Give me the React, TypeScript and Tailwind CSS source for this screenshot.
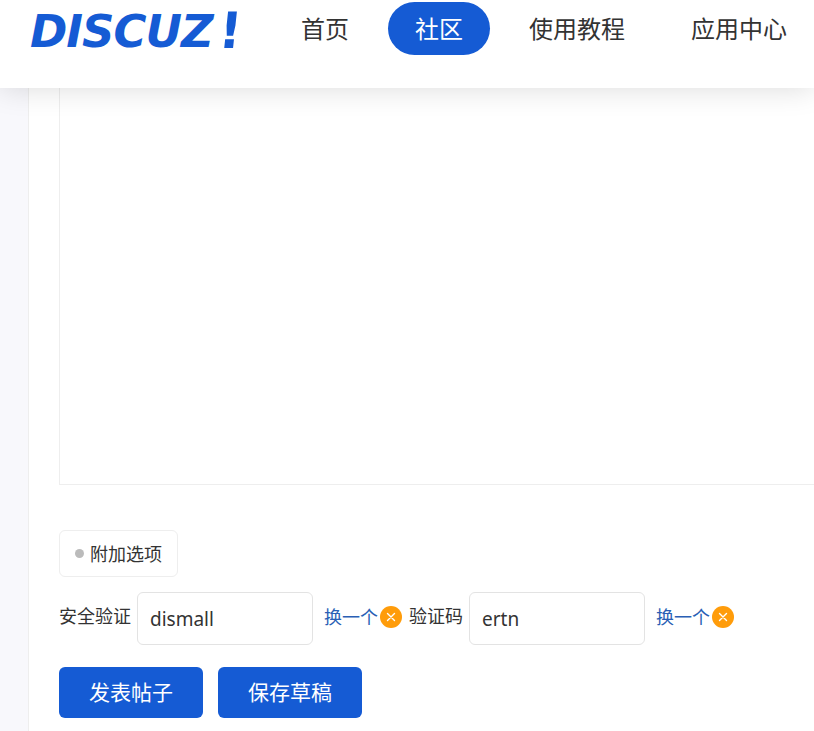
const cjk = "font-['Noto_Sans','Noto_Sans_CJK_SC',sans-serif]";

const NAV = ["首页", "社区", "使用教程", "应用中心"];

const RefreshLink = () => (
  <div className="flex items-center pb-[4px]">
    <a className="text-[18px] leading-[22px] text-[#2a5fb5]">换一个</a>
    <span className="ml-[2px] flex h-[22px] w-[22px] items-center justify-center rounded-full bg-[#ff9c0a]">
      <svg width="10" height="10" viewBox="0 0 10 10" fill="none" stroke="#fff" strokeWidth="1.4" strokeLinecap="round">
        <path d="M1.5 1.5l7 7M8.5 1.5l-7 7" />
      </svg>
    </span>
  </div>
);

const App = () => {
  return (
    <div className={`flex h-[731px] w-[814px] flex-col overflow-hidden bg-white ${cjk}`}>
      {/* Header */}
      <header className="relative z-10 flex h-[88px] shrink-0 items-start bg-white pl-[30px] shadow-[0_0_30px_rgba(0,0,0,0.15)]">
        <div className="mt-[6px] flex w-[244px] shrink-0 items-baseline whitespace-nowrap text-[#155bd4] font-['DejaVu_Sans',sans-serif] text-[45px] font-bold italic leading-[48px]">
          <span className="tracking-[-1px]">DISCUZ</span>
          <span className="ml-[6px] inline-block translate-y-[1px] -skew-x-[6deg] text-[50px] not-italic leading-[48px]">!</span>
        </div>
        <nav className="mt-[2px] flex gap-[12px]">
          {NAV.map((item) => (
            <a
              key={item}
              className={
                item === "社区"
                  ? "flex h-[53px] items-center rounded-full bg-[#155bd4] px-[27px] text-[24px] text-white"
                  : "flex h-[53px] items-center rounded-full px-[27px] text-[24px] text-[#333]"
              }
            >
              {item}
            </a>
          ))}
        </nav>
      </header>

      <main className="flex flex-1 bg-[#f8f8fc]">
        <div className="w-[28px] shrink-0" />
        <div className="min-w-0 flex-1 border-l border-[#eeeeee] bg-white pl-[30px]">
          {/* Editor area */}
          <div className="-mr-[10px] h-[397px] border border-t-0 border-[#eeeeee]" />

          <div className="mt-[45px] flex h-[47px] w-[119px] items-center rounded-[6px] border border-[#eeeeee] pl-[15px]">
            <span className="h-[9px] w-[9px] rounded-full bg-[#bbbbbb]" />
            <span className="ml-[6px] text-[18px] leading-none text-[#333]">附加选项</span>
          </div>

          {/* Captcha row */}
          <div className="mt-[15px] flex h-[53px] items-center">
            <span className="pb-[4px] text-[18px] text-[#333]">安全验证</span>
            <input
              readOnly
              value="dismall"
              className="ml-[6px] h-[53px] w-[176px] rounded-[6px] border border-[#e3e3e3] px-[12px] pt-[1px] text-[19px] text-[#333] outline-none"
            />
            <div className="ml-[11px]">
              <RefreshLink />
            </div>
            <span className="ml-[7px] pb-[4px] text-[18px] text-[#333]">验证码</span>
            <input
              readOnly
              value="ertn"
              className="ml-[6px] h-[53px] w-[176px] rounded-[6px] border border-[#e3e3e3] px-[12px] pt-[1px] text-[19px] text-[#333] outline-none"
            />
            <div className="ml-[11px]">
              <RefreshLink />
            </div>
          </div>

          {/* Actions */}
          <div className="mt-[22px] flex gap-[15px]">
            <button className="h-[51px] w-[144px] rounded-[6px] bg-[#155bd4] text-[21px] text-white">发表帖子</button>
            <button className="h-[51px] w-[144px] rounded-[6px] bg-[#155bd4] text-[21px] text-white">保存草稿</button>
          </div>
        </div>
      </main>
    </div>
  );
};

export default App;
